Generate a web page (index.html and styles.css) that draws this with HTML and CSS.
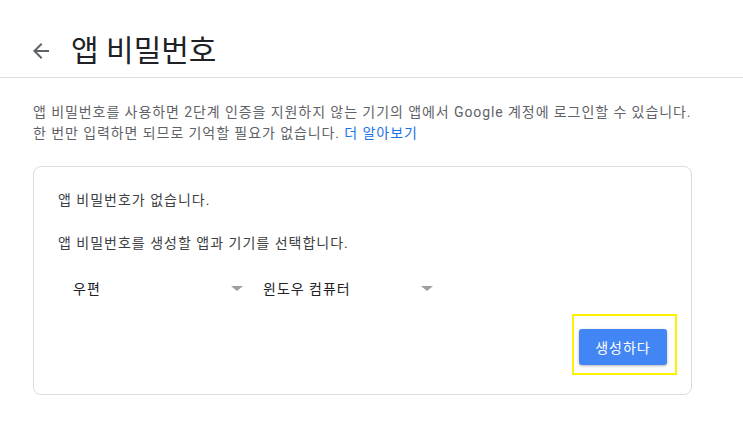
FILE: index.html
```html
<!DOCTYPE html>
<html lang="ko">
<head>
<meta charset="utf-8">
<link rel="stylesheet" href="styles.css">
</head>
<body>
<header class="header">
  <span class="back">
    <svg width="24" height="24" viewBox="0 0 24 24"><path d="M20 11H7.83l5.59-5.59L12 4l-8 8 8 8 1.41-1.41L7.83 13H20v-2z" fill="#5f6368"/></svg>
  </span>
  <h1 class="title">앱 비밀번호</h1>
</header>
<main class="main">
  <p class="desc">앱 비밀번호를 사용하면 2단계 인증을 지원하지 않는 기기의 앱에서 Google 계정에 로그인할 수 있습니다.<br>한 번만 입력하면 되므로 기억할 필요가 없습니다. <a class="link" href="#">더 알아보기</a></p>
  <section class="card">
    <p class="card-text first">앱 비밀번호가 없습니다.</p>
    <p class="card-text second">앱 비밀번호를 생성할 앱과 기기를 선택합니다.</p>
    <div class="selects">
      <div class="select"><span class="select-label">우편</span><span class="caret"></span></div>
      <div class="select"><span class="select-label">윈도우 컴퓨터</span><span class="caret"></span></div>
    </div>
    <div class="actions">
      <div class="highlight"><button class="btn">생성하다</button></div>
    </div>
  </section>
</main>
</body>
</html>
```
FILE: styles.css
```css
html, body {
  margin: 0;
  padding: 0;
  background: #fff;
}
body {
  font-family: Roboto, "Noto Sans CJK KR", sans-serif;
  color: #202124;
}
.header {
  height: 78px;
  border-bottom: 1px solid #dadce0;
  display: flex;
  align-items: center;
  padding-left: 29px;
  padding-top: 24px;
  gap: 18px;
  box-sizing: border-box;
}
.back {
  display: flex;
  width: 24px;
  height: 24px;
}
.title {
  margin: 0;
  font-size: 30px;
  font-weight: 400;
  color: #202124;
  line-height: 36px;
}
.main {
  padding: 0 33px;
}
.desc {
  margin: 24px 0 0;
  font-size: 14px;
  letter-spacing: 0.92px;
  line-height: 21px;
  color: #5f6368;
}
.link {
  color: #1a73e8;
  text-decoration: none;
}
.card {
  margin-top: 22px;
  width: 659px;
  height: 229px;
  box-sizing: border-box;
  border: 1px solid #dadce0;
  border-radius: 8px;
  padding: 23px 24px 0;
}
.card-text {
  margin: 0;
  font-size: 14px;
  letter-spacing: 1px;
  line-height: 21px;
  color: #3c4043;
}
.card-text.second {
  margin-top: 22px;
}
.selects {
  display: flex;
  margin-top: 22px;
}
.select {
  width: 190px;
  height: 24px;
  display: flex;
  align-items: center;
  justify-content: space-between;
  padding-left: 15px;
  padding-right: 5px;
  box-sizing: border-box;
}
.select-label {
  font-size: 14px;
  letter-spacing: 1px;
  color: #202124;
}
.caret {
  width: 0;
  height: 0;
  border-left: 6px solid transparent;
  border-right: 6px solid transparent;
  border-top: 5px solid #9e9e9e;
}
.actions {
  display: flex;
  justify-content: flex-end;
  margin-top: 14px;
  margin-right: -10px;
}
.highlight {
  border: 2px solid #fff200;
  padding: 13px 8px 8px 5px;
  display: flex;
}
.btn {
  width: 88px;
  height: 36px;
  border: none;
  border-radius: 3px;
  background: #4285f4;
  color: #fff;
  font-family: Roboto, "Noto Sans CJK KR", sans-serif;
  font-size: 14px;
  letter-spacing: 1px;
  box-shadow: 0 1px 3px rgba(0,0,0,0.3);
  padding: 0;
}
```
